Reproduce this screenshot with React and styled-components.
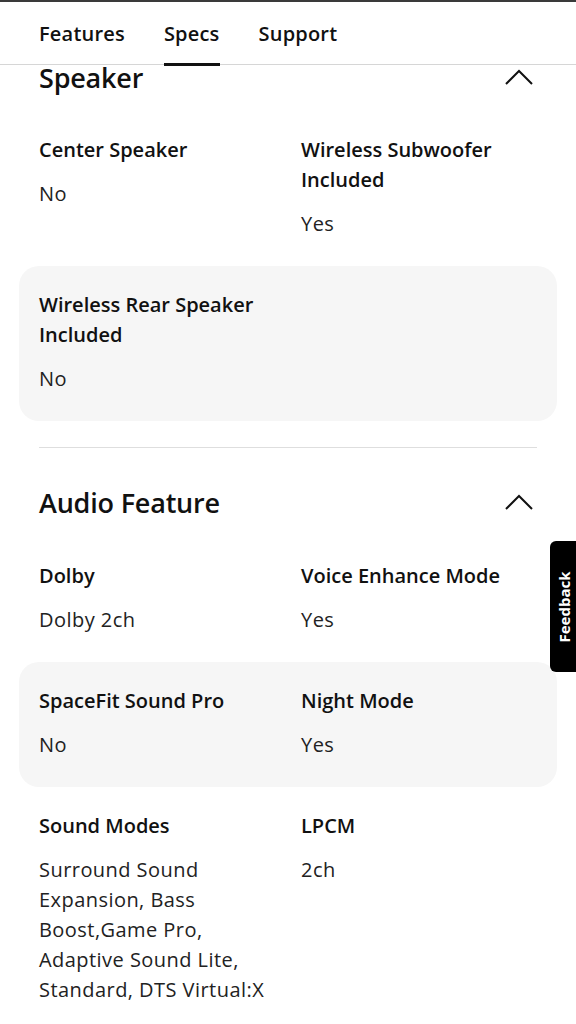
import React from 'react'
import styled, { createGlobalStyle } from 'styled-components'

const GlobalStyle = createGlobalStyle`
  html, body {
    margin: 0;
    padding: 0;
    background: #fff;
  }
  body {
    font-family: "Open Sans", "Noto Sans", sans-serif;
    color: #111;
    -webkit-font-smoothing: antialiased;
  }
`

const Page = styled.div`
  width: 576px;
`

const TabBar = styled.nav`
  display: flex;
  gap: 39px;
  height: 62px;
  padding: 0 39px;
  border-top: 2px solid #3a3a3a;
  border-bottom: 1px solid #d6d6d6;
  background: #fff;
`

const Tab = styled.div`
  display: flex;
  align-items: center;
  font-size: 20px;
  font-weight: 600;
  letter-spacing: 0.2px;
  color: #111;
  position: relative;

  &::after {
    content: '';
    display: ${(p) => (p.$active ? 'block' : 'none')};
    position: absolute;
    left: 0;
    right: 0;
    bottom: -2px;
    height: 3px;
    background: #111;
  }
`

const Content = styled.div`
  padding: 0 19px;
`

const SectionHead = styled.div`
  display: flex;
  align-items: center;
  justify-content: space-between;
  height: ${(p) => (p.$first ? '24px' : '34px')};
  margin: ${(p) => (p.$first ? '0 0 22px' : '37px 0 18px')};
  padding: 0 20px;
`

const Title = styled.h2`
  margin: 0;
  font-size: 27px;
  font-weight: 600;
  letter-spacing: -0.2px;
  color: #111;
`

const Chevron = styled.svg`
  width: 28px;
  height: 16px;
  margin-right: 4px;
`

const Row = styled.div`
  display: grid;
  grid-template-columns: 1fr 1fr;
  column-gap: 26px;
  padding: 24px 20px 27px;
  border-radius: 20px;
  background: ${(p) => (p.$shaded ? '#f6f6f6' : 'transparent')};
`

const Spec = styled.div`
  display: flex;
  flex-direction: column;
  gap: 14px;
`

const Label = styled.div`
  font-size: 20px;
  line-height: 30px;
  font-weight: 600;
  letter-spacing: 0px;
  color: #111;
`

const Value = styled.div`
  font-size: 20px;
  line-height: 30px;
  font-weight: 400;
  letter-spacing: 0.45px;
  color: #222;
`

const Divider = styled.hr`
  margin: 26px 20px 0;
  border: 0;
  border-top: 1px solid #dedede;
`

const BottomRule = styled.div`
  height: 3px;
  margin-top: 14px;
  background: #ececec;
`

const FeedbackTab = styled.div`
  position: fixed;
  right: 0;
  top: 541px;
  width: 26px;
  height: 131px;
  background: #000;
  border-radius: 6px 0 0 6px;
  display: flex;
  align-items: center;
  justify-content: center;
`

const FeedbackText = styled.span`
  transform: rotate(-90deg);
  white-space: nowrap;
  color: #fff;
  font-family: "Open Sans", sans-serif;
  font-size: 15px;
  font-weight: 700;
`

const ChevronUp = () => (
  <Chevron viewBox="0 0 28 16" fill="none">
    <polyline points="1,15 14,2 27,15" stroke="#111" strokeWidth="2" />
  </Chevron>
)

const SpecItem = ({ label, value }) => (
  <Spec>
    <Label>{label}</Label>
    {value && <Value>{value}</Value>}
  </Spec>
)

const sections = [
  {
    title: 'Speaker',
    rows: [
      [
        { label: 'Center Speaker', value: 'No' },
        { label: 'Wireless Subwoofer Included', value: 'Yes' },
      ],
      [{ label: 'Wireless Rear Speaker Included', value: 'No' }],
    ],
  },
  {
    title: 'Audio Feature',
    rows: [
      [
        { label: 'Dolby', value: 'Dolby 2ch' },
        { label: 'Voice Enhance Mode', value: 'Yes' },
      ],
      [
        { label: 'SpaceFit Sound Pro', value: 'No' },
        { label: 'Night Mode', value: 'Yes' },
      ],
      [
        {
          label: 'Sound Modes',
          value:
            'Surround Sound Expansion, Bass Boost,Game Pro, Adaptive Sound Lite, Standard, DTS Virtual:X',
        },
        { label: 'LPCM', value: '2ch' },
      ],
    ],
  },
]

const App = () => (
  <Page>
    <GlobalStyle />
    <TabBar>
      <Tab>Features</Tab>
      <Tab $active>Specs</Tab>
      <Tab>Support</Tab>
    </TabBar>
    <Content>
      {sections.map((section, si) => (
        <section key={section.title}>
          {si > 0 && <Divider />}
          <SectionHead $first={si === 0}>
            <Title>{section.title}</Title>
            <ChevronUp />
          </SectionHead>
          {section.rows.map((row, ri) => (
            <Row key={ri} $shaded={ri % 2 === 1}>
              {row.map((item) => (
                <SpecItem key={item.label} {...item} />
              ))}
            </Row>
          ))}
        </section>
      ))}
    </Content>
    <BottomRule />
    <FeedbackTab>
      <FeedbackText>Feedback</FeedbackText>
    </FeedbackTab>
  </Page>
)

export default App
